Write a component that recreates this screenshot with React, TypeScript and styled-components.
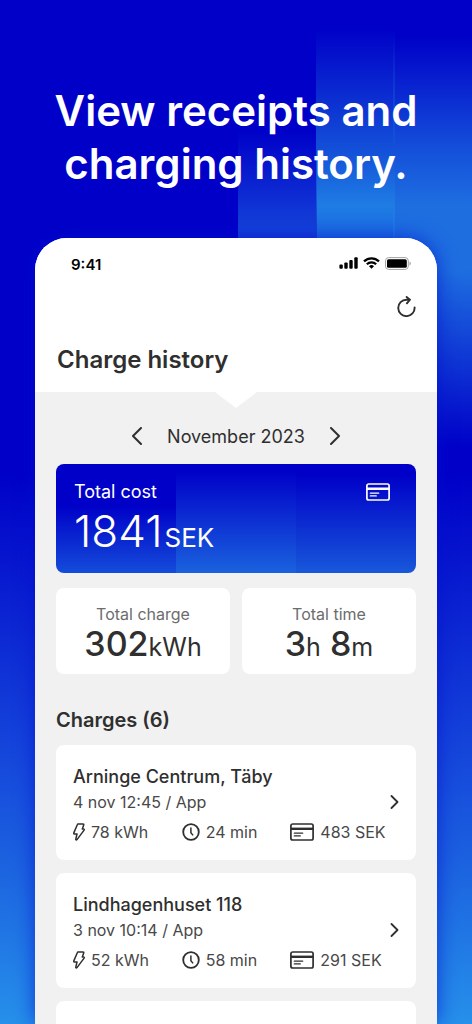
import React from "react";
import styled, { createGlobalStyle } from "styled-components";

const GlobalStyle = createGlobalStyle`
  *, *::before, *::after { box-sizing: border-box; }
  body { margin: 0; font-family: Inter, "Liberation Sans", sans-serif; color: #2f2f2f; }
  h1, h2, h3, p { margin: 0; }
  button { border: 0; padding: 0; background: none; color: inherit; font: inherit; display: flex; cursor: pointer; }
  svg { display: block; flex: none; }
`;

const Page = styled.main`
  height: 100vh;
  overflow: hidden;
  display: flex;
  flex-direction: column;
  background:
    linear-gradient(rgba(20, 66, 216, 0) 130px, #1442d8 230px, rgba(20, 66, 216, 0) 420px) 60.5% 0 / 16.8% 450px no-repeat,
    linear-gradient(rgba(31, 124, 228, 0) 28px, #1350d8 150px, #1f7ce4 205px, rgba(31, 124, 228, 0) 440px) 80.4% 0 / 16.8% 450px no-repeat,
    linear-gradient(rgba(30, 110, 224, 0) 36px, #1450da 150px, #1e6ee0 205px, #1e6ee0 270px, rgba(0, 0, 200, 0) 448px) 100% 0 / 16.8% 450px no-repeat,
    linear-gradient(#0000c8 46%, #1442da 72%, #1c64e0 85%, #2690ea 100%);
`;

const Headline = styled.h1`
  padding: 84px 24px 48px;
  color: #fff;
  font-size: 42px;
  line-height: 53px;
  font-weight: 600;
  text-align: center;
`;

const Phone = styled.section`
  flex: 1;
  min-height: 0;
  margin: 0 35px;
  display: flex;
  flex-direction: column;
  overflow: hidden;
  border-radius: 32px 32px 0 0;
  background: #f1f1f1;
  box-shadow: 0 0 20px rgba(0, 14, 205, 0.65);
`;

const Header = styled.header`
  flex: none;
  padding: 16px 21px 17px 22px;
  background: #fff;
`;

const StatusBar = styled.div`
  display: flex;
  align-items: center;
  justify-content: space-between;
  height: 20px;
  padding: 0 5px 0 14px;
  color: #000;
  font-size: 15px;
  font-weight: 600;
`;

const StatusIcons = styled.div`
  display: flex;
  align-items: center;
  gap: 5px;
  padding-bottom: 2px;
`;

const Toolbar = styled.div`
  display: flex;
  justify-content: flex-end;
  margin: 22px 0 28px;
`;

const Title = styled.h2`
  font-size: 24px;
  line-height: 30px;
  font-weight: 600;
`;

const Notch = styled.div`
  flex: none;
  align-self: center;
  width: 42px;
  height: 16px;
  background: #fff;
  clip-path: polygon(0 0, 100% 0, 50% 100%);
`;

const Content = styled.div`
  flex: 1;
  min-height: 0;
  padding: 16px 21px 0;
  display: flex;
  flex-direction: column;
`;

const MonthNav = styled.nav`
  display: flex;
  align-items: center;
  justify-content: center;
  gap: 24px;
  height: 24px;
  margin-bottom: 16px;
  font-size: 18px;
`;

const CostCard = styled.section`
  flex: none;
  display: flex;
  justify-content: space-between;
  align-items: flex-start;
  padding: 16px 26px 15px 18px;
  border-radius: 8px;
  color: #fff;
  background:
    linear-gradient(#0000c8 6%, #1a62de 100%) 50% 0 / 33.4% 100% no-repeat,
    linear-gradient(#0000c8 10%, #1858da 100%) 100% 0 / 33.4% 100% no-repeat,
    linear-gradient(#0000c8 38%, #144cda 100%);
`;

const CostLabel = styled.p`
  font-size: 18px;
  line-height: 24px;
`;

const CostValue = styled.p`
  font-size: 44px;
  line-height: 54px;
  font-weight: 300;
`;

const CostUnit = styled.span`
  margin-left: 2px;
  font-size: 26px;
  line-height: 24px;
  font-weight: 400;
`;

const CostIcon = styled.div`
  padding-top: 3px;
`;

const Stats = styled.div`
  flex: none;
  display: grid;
  grid-template-columns: 1fr 1fr;
  gap: 12px;
  margin: 15px 0 32px;
`;

const StatCard = styled.section`
  padding: 15px 0 12px;
  border-radius: 8px;
  background: #fff;
  text-align: center;
`;

const StatLabel = styled.p`
  color: #6c6c6c;
  font-size: 16px;
  line-height: 22px;
`;

const StatValue = styled.p`
  font-size: 34px;
  line-height: 37px;
  font-weight: 500;
`;

const StatUnit = styled.span`
  font-size: 25px;
  line-height: 24px;
  font-weight: 400;
`;

const SectionTitle = styled.h3`
  margin-bottom: 11px;
  font-size: 20px;
  line-height: 28px;
  font-weight: 600;
`;

const ChargeList = styled.div`
  flex: 1;
  min-height: 0;
  display: flex;
  flex-direction: column;
  gap: 13px;
`;

const ChargeCard = styled.a`
  flex: none;
  min-height: 115px;
  padding: 20px 17px 17px;
  border-radius: 8px;
  background: #fff;
  color: inherit;
  text-decoration: none;
`;

const ChargeTitle = styled.p`
  font-size: 18px;
  line-height: 24px;
  font-weight: 500;
`;

const ChargeSub = styled.div`
  display: flex;
  align-items: center;
  justify-content: space-between;
  margin: 2px 0 8px;
  color: #484848;
  font-size: 16px;
  line-height: 22px;
`;

const Metrics = styled.div`
  display: grid;
  grid-template-columns: repeat(3, minmax(0, 1fr));
  color: #484848;
  font-size: 16px;
  line-height: 22px;
  white-space: nowrap;
`;

const Metric = styled.span`
  display: flex;
  align-items: center;
  gap: 6px;
`;

const Chevron = ({ left = false, small = false }: { left?: boolean; small?: boolean }) => (
  <svg
    width={small ? 9 : 12}
    height={small ? 14 : 18}
    viewBox="0 0 12 18"
    fill="none"
    stroke="#2f2f2f"
    strokeWidth={small ? 2.4 : 2}
    strokeLinecap="round"
    strokeLinejoin="round"
    aria-hidden="true"
  >
    <path d={left ? "M10 1 2 9l8 8" : "M2 1l8 8-8 8"} />
  </svg>
);

const CardIcon = ({ color = "#2f2f2f" }: { color?: string }) => (
  <svg width="24" height="18" viewBox="0 0 24 18" fill="none" stroke={color} strokeLinecap="round" aria-hidden="true">
    <rect x="0.9" y="1" width="22.2" height="16" rx="1.8" strokeWidth="1.7" />
    <path d="M1 5.8h22" strokeWidth="2.4" strokeLinecap="butt" />
    <path d="M4.3 10.2h8.4M4.3 12.9h6" strokeWidth="1.2" />
  </svg>
);

const BoltIcon = () => (
  <svg width="12" height="18" viewBox="0 0 12 18" fill="none" stroke="#2f2f2f" strokeWidth="1.5" strokeLinejoin="round" aria-hidden="true">
    <path d="M5.2 1h4.9c.5 0 .8.4.6.9L9.3 6h1.2c.6 0 .9.6.6 1.1L4 16.6c-.5.6-1.4.3-1.2-.5L4 11H1.6c-.6 0-1-.5-.8-1.100L4.300 1.700C4.400 1.200 4.700 1 5.200 1z" />
  </svg>
);

const ClockIcon = () => (
  <svg width="18" height="18" viewBox="0 0 18 18" fill="none" stroke="#2f2f2f" strokeWidth="1.8" strokeLinecap="round" strokeLinejoin="round" aria-hidden="true">
    <circle cx="9" cy="9" r="7.8" />
    <path d="M8.9 5v4.700l1.800 2.200" strokeWidth="1.500" />
  </svg>
);

const RefreshIcon = () => (
  <svg width="19" height="21" viewBox="0 0 19 21" fill="none" stroke="#2f2f2f" strokeWidth="1.9" strokeLinecap="round" strokeLinejoin="round" aria-hidden="true">
    <path d="M17.600 11.400A8.200 8.200 0 1 1 9.500 3.700h3" />
    <path d="M9.600 1l3.300 2.700-3 3.600" />
  </svg>
);

const SignalIcon = () => (
  <svg width="19" height="12" viewBox="0 0 19 12" fill="#000" aria-hidden="true">
    <rect x="0.4" y="7.600" width="3.400" height="4.200" rx="1" />
    <rect x="5.300" y="5.400" width="3.400" height="6.400" rx="1" />
    <rect x="10.300" y="3" width="3.400" height="8.800" rx="1" />
    <rect x="15.300" y="0.200" width="3.400" height="11.600" rx="1" />
  </svg>
);

const WifiIcon = () => (
  <svg width="17" height="12" viewBox="0 0 17 12" fill="none" stroke="#000" strokeWidth="2.200" aria-hidden="true">
    <path d="M1 4.400a10.800 10.800 0 0 1 15 0" />
    <path d="M3.800 7.300a6.800 6.800 0 0 1 9.400 0" />
    <path d="M8.500 11.800 6 9.300a3.600 3.600 0 0 1 5 0z" fill="#000" stroke="none" />
  </svg>
);

const BatteryIcon = () => (
  <svg width="26" height="13" viewBox="0 0 26 13" aria-hidden="true">
    <rect x="0.500" y="0.600" width="22.800" height="11.800" rx="3.200" fill="none" stroke="#a3a3a3" />
    <rect x="2" y="2.200" width="19.800" height="8.600" rx="1.600" fill="#000" />
    <path d="M24.500 4.400v4.200a2.300 2.300 0 0 0 0-4.200z" fill="#a3a3a3" />
  </svg>
);

const charges = [
  { place: "Arninge Centrum, Täby", when: "4 nov 12:45 / App", energy: "78 kWh", time: "24 min", cost: "483 SEK" },
  { place: "Lindhagenhuset 118", when: "3 nov 10:14 / App", energy: "52 kWh", time: "58 min", cost: "291 SEK" },
];

export default function App() {
  return (
    <>
      <GlobalStyle />
      <Page>
        <Headline>
          View receipts and
          <br />
          charging history.
        </Headline>
        <Phone>
          <Header>
            <StatusBar>
              <span>9:41</span>
              <StatusIcons>
                <SignalIcon />
                <WifiIcon />
                <BatteryIcon />
              </StatusIcons>
            </StatusBar>
            <Toolbar>
              <button type="button" aria-label="Refresh">
                <RefreshIcon />
              </button>
            </Toolbar>
            <Title>Charge history</Title>
          </Header>
          <Notch />
          <Content>
            <MonthNav>
              <button type="button" aria-label="Previous month">
                <Chevron left />
              </button>
              <span>November 2023</span>
              <button type="button" aria-label="Next month">
                <Chevron />
              </button>
            </MonthNav>
            <CostCard>
              <div>
                <CostLabel>Total cost</CostLabel>
                <CostValue>
                  1841<CostUnit>SEK</CostUnit>
                </CostValue>
              </div>
              <CostIcon>
                <CardIcon color="#fff" />
              </CostIcon>
            </CostCard>
            <Stats>
              <StatCard>
                <StatLabel>Total charge</StatLabel>
                <StatValue>
                  302<StatUnit>kWh</StatUnit>
                </StatValue>
              </StatCard>
              <StatCard>
                <StatLabel>Total time</StatLabel>
                <StatValue>
                  3<StatUnit>h</StatUnit> 8<StatUnit>m</StatUnit>
                </StatValue>
              </StatCard>
            </Stats>
            <SectionTitle>Charges (6)</SectionTitle>
            <ChargeList>
              {charges.map((c) => (
                <ChargeCard href="#" key={c.place}>
                  <ChargeTitle>{c.place}</ChargeTitle>
                  <ChargeSub>
                    <span>{c.when}</span>
                    <Chevron small />
                  </ChargeSub>
                  <Metrics>
                    <Metric>
                      <BoltIcon />
                      {c.energy}
                    </Metric>
                    <Metric>
                      <ClockIcon />
                      {c.time}
                    </Metric>
                    <Metric>
                      <CardIcon />
                      {c.cost}
                    </Metric>
                  </Metrics>
                </ChargeCard>
              ))}
              <ChargeCard href="#" aria-label="Next charge" />
            </ChargeList>
          </Content>
        </Phone>
      </Page>
    </>
  );
}
